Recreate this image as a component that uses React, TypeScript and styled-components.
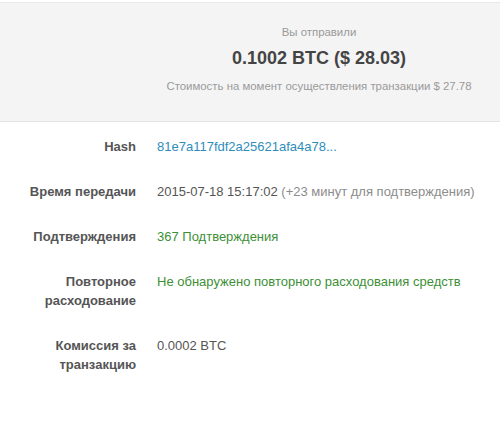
import React from "react";
import styled, { createGlobalStyle } from "styled-components";

const Global = createGlobalStyle`
  html, body { margin: 0; padding: 0; background: #fff; }
  body { font-family: "Liberation Sans", Arial, sans-serif; }
`;

const Page = styled.div`
  padding-top: 2px;
  width: 500px;
`;

const Summary = styled.section`
  display: grid;
  grid-template-columns: 138px 1fr;
  background: #f4f4f4;
  border-top: 1px solid #e9e9e9;
  border-bottom: 1px solid #e4e4e4;
  padding: 21px 0 27px;
`;

const SummaryBody = styled.div`
  grid-column: 2;
  display: flex;
  flex-direction: column;
  align-items: center;
  text-align: center;
`;

const Caption = styled.div<{ $gap?: number }>`
  font-size: 11.4px;
  line-height: 16px;
  color: #9a9a9a;
  margin-top: ${(p) => p.$gap ?? 0}px;
`;

const Amount = styled.div`
  margin-top: 6px;
  font-size: 18px;
  line-height: 24px;
  font-weight: bold;
  color: #444;
`;

const Details = styled.dl`
  margin: 0;
  padding: 15px 0 40px;
  display: grid;
  grid-template-columns: 136px 1fr;
  column-gap: 21px;
  row-gap: 26px;
  font-size: 13px;
  line-height: 19px;
`;

const Label = styled.dt`
  margin: 0;
  text-align: right;
  font-weight: bold;
  color: #555;
`;

const Value = styled.dd<{ $tone?: "link" | "ok" | "plain" }>`
  margin: 0;
  color: ${(p) =>
    p.$tone === "link" ? "#2f8dbb" : p.$tone === "ok" ? "#3d8f35" : "#555"};
`;

const Muted = styled.span`
  color: #8c8c8c;
`;

export default function App() {
  return (
    <Page>
      <Global />
      <Summary>
        <SummaryBody>
          <Caption>Вы отправили</Caption>
          <Amount>0.1002 BTC ($ 28.03)</Amount>
          <Caption $gap={8}>Стоимость на момент осуществления транзакции $ 27.78</Caption>
        </SummaryBody>
      </Summary>
      <Details>
        <Label>Hash</Label>
        <Value $tone="link">81e7a117fdf2a25621afa4a78...</Value>
        <Label>Время передачи</Label>
        <Value>
          2015-07-18 15:17:02 <Muted>(+23 минут для подтверждения)</Muted>
        </Value>
        <Label>Подтверждения</Label>
        <Value $tone="ok">367 Подтверждения</Value>
        <Label>
          Повторное
          <br />
          расходование
        </Label>
        <Value $tone="ok">Не обнаружено повторного расходования средств</Value>
        <Label>
          Комиссия за
          <br />
          транзакцию
        </Label>
        <Value>0.0002 BTC</Value>
      </Details>
    </Page>
  );
}
